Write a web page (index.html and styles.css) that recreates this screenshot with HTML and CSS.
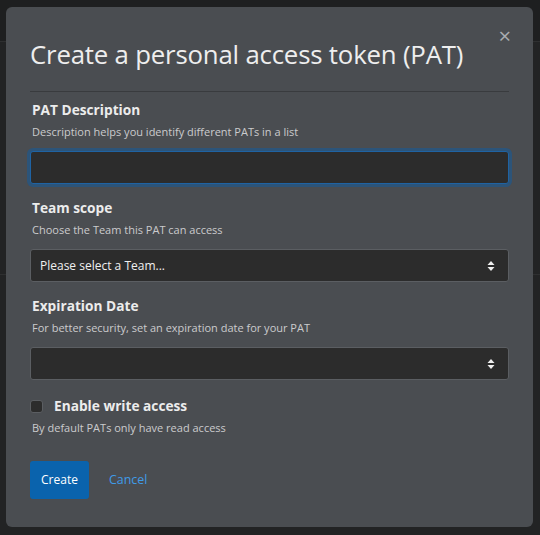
FILE: index.html
```html
<!DOCTYPE html>
<html>
<head>
<meta charset="utf-8">
<link rel="stylesheet" href="styles.css">
</head>
<body>
<div class="page">
  <div class="topbar"></div>
  <div class="midline"></div>
  <div class="modal">
    <div class="modal-header">
      <h4 class="modal-title">Create a personal access token (PAT)</h4>
      <span class="close">&times;</span>
    </div>
    <div class="modal-body">
      <div class="group">
        <div class="label">PAT Description</div>
        <div class="help">Description helps you identify different PATs in a list</div>
        <div class="input focused"></div>
      </div>
      <div class="group">
        <div class="label">Team scope</div>
        <div class="help">Choose the Team this PAT can access</div>
        <div class="input select"><span>Please select a Team...</span>
          <svg class="arrows" width="8" height="12" viewBox="0 0 8 12"><path d="M4 1 L7.5 5 H0.5 Z M4 11 L7.5 7 H0.5 Z" fill="#f0f0f0"/></svg>
        </div>
      </div>
      <div class="group">
        <div class="label">Expiration Date</div>
        <div class="help">For better security, set an expiration date for your PAT</div>
        <div class="input select"><span></span>
          <svg class="arrows" width="8" height="12" viewBox="0 0 8 12"><path d="M4 1 L7.5 5 H0.5 Z M4 11 L7.5 7 H0.5 Z" fill="#f0f0f0"/></svg>
        </div>
      </div>
      <div class="check-row">
        <span class="checkbox"></span>
        <span class="label check-label">Enable write access</span>
      </div>
      <div class="help help-check">By default PATs only have read access</div>
      <div class="actions">
        <button class="btn-primary">Create</button>
        <a class="btn-link">Cancel</a>
      </div>
    </div>
  </div>
</div>
</body>
</html>
```

FILE: styles.css
```css
html, body {
  margin: 0;
  padding: 0;
  background: #222324;
  font-family: "Open Sans", "Noto Sans", sans-serif;
}
.page {
  position: relative;
  width: 540px;
  height: 535px;
  overflow: hidden;
  padding-top: 7px;
  box-sizing: border-box;
}
.topbar {
  position: absolute;
  left: 0; top: 0; right: 0;
  height: 41px;
  background: #1e1f20;
  border-bottom: 1px solid #2e2f30;
}
.midline {
  position: absolute;
  left: 0; right: 0; top: 274px;
  height: 1px;
  background: #2e2f30;
}
.modal {
  position: relative;
  margin-left: 6px;
  width: 527px;
  height: 520px;
  background: #4a4d51;
  border-radius: 6px;
  box-sizing: border-box;
  padding: 0 24px;
}
.modal-header {
  position: relative;
  border-bottom: 1px solid #393b3e;
  padding: 25px 0 15px;
}
.modal-title {
  margin: 0;
  font-size: 25.8px;
  font-weight: 400;
  line-height: 44px;
  color: #eeeeee;
  letter-spacing: -0.2px;
}
.close {
  position: absolute;
  right: -2px;
  top: 17px;
  font-size: 22px;
  color: #a9acb0;
  line-height: 1;
}
.modal-body {
  padding-top: 7px;
}
.group {
  margin-bottom: 13px;
}
.label {
  font-size: 13.7px;
  font-weight: 700;
  color: #ececec;
  line-height: 22px;
  padding-left: 2px;
}
.help {
  font-size: 11px;
  color: #cacbcd;
  line-height: 18px;
  padding-left: 2px;
  margin-top: 2px;
  margin-bottom: 10px;
}
.input {
  height: 33px;
  box-sizing: border-box;
  background: #2c2c2c;
  border: 1px solid #5b5e62;
  border-radius: 3px;
  display: flex;
  align-items: center;
  justify-content: space-between;
  padding: 0 13px 0 9px;
  color: #f0f0f0;
  font-size: 12px;
}
.input.focused {
  border-color: #1f63a3;
  box-shadow: 0 0 0 3px #2c5479;
}
.check-row {
  display: flex;
  align-items: center;
  gap: 11px;
  padding-top: 2px;
}
.checkbox {
  width: 11px;
  height: 11px;
  background: #2c2c2c;
  border: 1px solid #5b5e62;
  border-radius: 3px;
}
.check-label {
  padding-left: 0;
  font-size: 13.7px;
}
.help-check {
  margin-top: 2px;
  margin-bottom: 0;
}
.actions {
  display: flex;
  align-items: center;
  gap: 20px;
  margin-top: 23.5px;
}
.btn-primary {
  background: #0a63ad;
  color: #ffffff;
  border: none;
  border-radius: 3px;
  height: 38px;
  width: 59px;
  padding: 0;
  font-family: inherit;
  font-size: 12px;
}
.btn-link {
  color: #3f9be8;
  font-size: 12.4px;
}
```
